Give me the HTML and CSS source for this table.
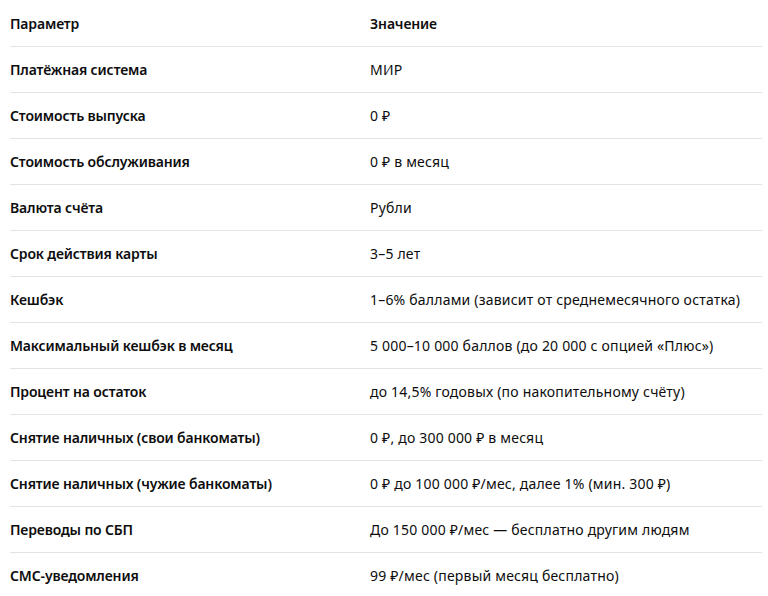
FILE: index.html
```html
<!DOCTYPE html>
<html lang="ru">
<head>
<meta charset="utf-8">
<link rel="stylesheet" href="styles.css">
</head>
<body>
<table class="spec">
  <thead>
    <tr><th>Параметр</th><th>Значение</th></tr>
  </thead>
  <tbody>
    <tr><td class="key">Платёжная система</td><td>МИР</td></tr>
    <tr><td class="key">Стоимость выпуска</td><td>0 ₽</td></tr>
    <tr><td class="key">Стоимость обслуживания</td><td>0 ₽ в месяц</td></tr>
    <tr><td class="key">Валюта счёта</td><td>Рубли</td></tr>
    <tr><td class="key">Срок действия карты</td><td>3–5 лет</td></tr>
    <tr><td class="key">Кешбэк</td><td>1–6% баллами (зависит от среднемесячного остатка)</td></tr>
    <tr><td class="key">Максимальный кешбэк в месяц</td><td>5 000–10 000 баллов (до 20 000 с опцией «Плюс»)</td></tr>
    <tr><td class="key">Процент на остаток</td><td>до 14,5% годовых (по накопительному счёту)</td></tr>
    <tr><td class="key">Снятие наличных (свои банкоматы)</td><td>0 ₽, до 300 000 ₽ в месяц</td></tr>
    <tr><td class="key">Снятие наличных (чужие банкоматы)</td><td>0 ₽ до 100 000 ₽/мес, далее 1% (мин. 300 ₽)</td></tr>
    <tr><td class="key">Переводы по СБП</td><td>До 150 000 ₽/мес — бесплатно другим людям</td></tr>
    <tr><td class="key">СМС-уведомления</td><td>99 ₽/мес (первый месяц бесплатно)</td></tr>
  </tbody>
</table>
</body>
</html>
```
FILE: styles.css
```css
html, body {
  margin: 0;
  padding: 0;
  background: #ffffff;
}
body {
  font-family: "Noto Sans", "Open Sans", sans-serif;
  font-size: 14px;
  color: #0d0d0d;
}
.spec {
  margin: 1px 0 0 10px;
  width: 752px;
  border-collapse: collapse;
}
.spec th,
.spec td {
  height: 45px;
  padding: 0;
  text-align: left;
  vertical-align: middle;
  border-bottom: 1px solid #e3e3e3;
  white-space: nowrap;
  font-weight: 400;
  letter-spacing: 0.2px;
}
.spec th:first-child,
.spec td:first-child {
  width: 360px;
}
.spec th,
.spec .key {
  font-weight: 600;
  letter-spacing: -0.15px;
}
```
